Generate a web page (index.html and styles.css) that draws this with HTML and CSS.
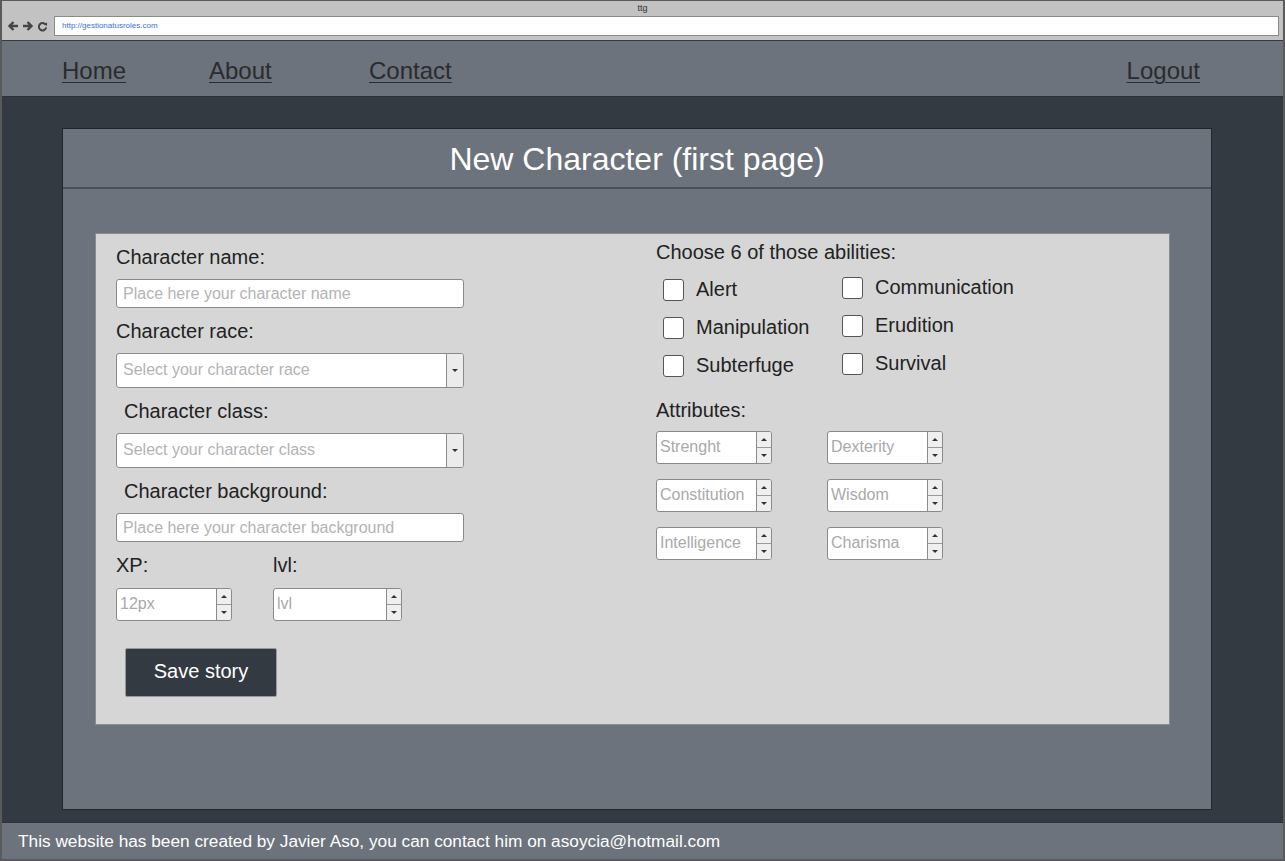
FILE: index.html
```html
<!DOCTYPE html>
<html>
<head>
<meta charset="utf-8">
<title>ttg</title>
<link rel="stylesheet" href="styles.css">
</head>
<body>
<div class="frame">
  <div class="chrome">
    <div class="chrome-title">ttg</div>
    <div class="chrome-bar">
      <div class="chrome-icons">
        <svg width="12" height="12" viewBox="0 0 12 12"><path d="M11 6H3M6.5 2L2.5 6l4 4" fill="none" stroke="#444" stroke-width="2.4"/></svg>
        <svg width="12" height="12" viewBox="0 0 12 12"><path d="M1 6h8M5.5 2l4 4-4 4" fill="none" stroke="#444" stroke-width="2.4"/></svg>
        <svg width="11" height="11" viewBox="0 0 12 12"><path d="M9.5 4.2A4 4 0 1 0 10 7" fill="none" stroke="#444" stroke-width="2.2"/><path d="M7.5 3.6L11 1.5 11 5.5z" fill="#444"/></svg>
      </div>
      <div class="url">http://gestionatusroles.com</div>
    </div>
  </div>

  <nav class="nav">
    <a class="nav-link" href="#">Home</a>
    <a class="nav-link" href="#">About</a>
    <a class="nav-link" href="#">Contact</a>
    <span class="nav-spacer"></span>
    <a class="nav-link" href="#">Logout</a>
  </nav>

  <main class="main">
    <section class="card">
      <header class="card-header">New Character (first page)</header>
      <div class="card-body">
        <div class="panel">
          <div class="col-left">
            <div class="label">Character name:</div>
            <input class="text-input" type="text" placeholder="Place here your character name">
            <div class="label">Character race:</div>
            <div class="select"><span class="select-text">Select your character race</span><span class="select-btn"><i class="tri-down"></i></span></div>
            <div class="label indent">Character class:</div>
            <div class="select"><span class="select-text">Select your character class</span><span class="select-btn"><i class="tri-down"></i></span></div>
            <div class="label indent">Character background:</div>
            <input class="text-input" type="text" placeholder="Place here your character background">
            <div class="xp-row">
              <div class="xp-field">
                <div class="label">XP:</div>
                <div class="num w116"><input class="num-input" type="text" placeholder="12px"><span class="spin"><span class="spin-half"><i class="tri-up"></i></span><span class="spin-half"><i class="tri-down"></i></span></span></div>
              </div>
              <div class="xp-field">
                <div class="label">lvl:</div>
                <div class="num w129"><input class="num-input" type="text" placeholder="lvl"><span class="spin"><span class="spin-half"><i class="tri-up"></i></span><span class="spin-half"><i class="tri-down"></i></span></span></div>
              </div>
            </div>
            <button class="save-btn" type="button">Save story</button>
          </div>

          <div class="col-right">
            <div class="label">Choose 6 of those abilities:</div>
            <div class="abilities">
              <div class="ab-col">
                <label class="check"><input type="checkbox" class="box"><span>Alert</span></label>
                <label class="check"><input type="checkbox" class="box"><span>Manipulation</span></label>
                <label class="check"><input type="checkbox" class="box"><span>Subterfuge</span></label>
              </div>
              <div class="ab-col ab-col2">
                <label class="check"><input type="checkbox" class="box"><span>Communication</span></label>
                <label class="check"><input type="checkbox" class="box"><span>Erudition</span></label>
                <label class="check"><input type="checkbox" class="box"><span>Survival</span></label>
              </div>
            </div>
            <div class="label attr-label">Attributes:</div>
            <div class="attrs">
              <div class="num w116"><input class="num-input" type="text" placeholder="Strenght"><span class="spin"><span class="spin-half"><i class="tri-up"></i></span><span class="spin-half"><i class="tri-down"></i></span></span></div>
              <div class="num w116"><input class="num-input" type="text" placeholder="Dexterity"><span class="spin"><span class="spin-half"><i class="tri-up"></i></span><span class="spin-half"><i class="tri-down"></i></span></span></div>
              <div class="num w116"><input class="num-input" type="text" placeholder="Constitution"><span class="spin"><span class="spin-half"><i class="tri-up"></i></span><span class="spin-half"><i class="tri-down"></i></span></span></div>
              <div class="num w116"><input class="num-input" type="text" placeholder="Wisdom"><span class="spin"><span class="spin-half"><i class="tri-up"></i></span><span class="spin-half"><i class="tri-down"></i></span></span></div>
              <div class="num w116"><input class="num-input" type="text" placeholder="Intelligence"><span class="spin"><span class="spin-half"><i class="tri-up"></i></span><span class="spin-half"><i class="tri-down"></i></span></span></div>
              <div class="num w116"><input class="num-input" type="text" placeholder="Charisma"><span class="spin"><span class="spin-half"><i class="tri-up"></i></span><span class="spin-half"><i class="tri-down"></i></span></span></div>
            </div>
          </div>
        </div>
      </div>
    </section>
  </main>

  <footer class="footer">This website has been created by Javier Aso, you can contact him on asoycia@hotmail.com</footer>
</div>
</body>
</html>
```

FILE: styles.css
```css
* { box-sizing: border-box; }
html, body { margin: 0; padding: 0; }
body {
  width: 1285px;
  height: 861px;
  overflow: hidden;
  font-family: "Liberation Sans", Arial, sans-serif;
  background: #343a42;
}
.frame {
  width: 1285px;
  height: 861px;
  border: 2px solid #5a5a5a;
  border-top-width: 1px;
  display: flex;
  flex-direction: column;
}
.chrome {
  height: 39px;
  background: #c2c2c2;
  display: flex;
  flex-direction: column;
}
.chrome-title {
  height: 15px;
  font-size: 9px;
  line-height: 14px;
  text-align: center;
  color: #333;
}
.chrome-bar {
  display: flex;
  align-items: center;
  height: 20px;
  padding-left: 5px;
}
.chrome-icons {
  display: flex;
  align-items: center;
  gap: 3px;
  width: 47px;
}
.url {
  width: 1225px;
  height: 20px;
  background: #fff;
  border: 1px solid #8a8a8a;
  font-size: 8px;
  line-height: 18px;
  padding-left: 7px;
  color: #3b6fd6;
}
.nav {
  height: 58px;
  background: #6c737c;
  border-top: 1px solid #3a3a3a;
  border-bottom: 1px solid #2e3238;
  display: grid;
  grid-template-columns: 147px 160px auto 1fr auto;
  align-items: center;
  padding-left: 60px;
  padding-right: 83px;
  padding-top: 7px;
}
.nav-link {
  font-size: 24px;
  color: #2b2b2b;
  text-decoration: underline;
  text-underline-offset: 3px;
  text-decoration-thickness: 1px;
  padding-bottom: 2px;
}
.main {
  flex: 1;
  background: #343a42;
  padding: 31px 0 12px 60px;
}
.card {
  width: 1150px;
  height: 682px;
  background: #6c737c;
  border: 1px solid #23272c;
}
.card-header {
  height: 60px;
  border-bottom: 2px solid #4a5058;
  color: #fff;
  font-size: 32px;
  text-align: center;
  line-height: 60px;
}
.card-body {
  padding: 44px 40px 0 32px;
}
.panel {
  width: 1075px;
  height: 492px;
  background: #d6d6d6;
  border: 1px solid #8c8c8c;
  display: grid;
  grid-template-columns: 540px 1fr;
  padding-left: 20px;
}
.label {
  font-size: 20px;
  line-height: 24px;
  height: 24px;
  color: #222;
}
.indent { padding-left: 8px; }
.col-left {
  padding-top: 11px;
  display: flex;
  flex-direction: column;
  align-items: flex-start;
}
.col-left > .label { margin-bottom: 10px; }
.text-input {
  width: 348px;
  height: 29px;
  border: 1px solid #8a8a8a;
  border-radius: 3px;
  background: #fff;
  font-family: "Liberation Sans", Arial, sans-serif;
  font-size: 16px;
  padding: 0 6px;
  margin: 0 0 11px 0;
  outline: none;
}
.text-input::placeholder, .num-input::placeholder { color: #b3b3b3; opacity: 1; }
.select {
  width: 348px;
  height: 35px;
  border: 1px solid #8a8a8a;
  border-radius: 3px;
  background: #fff;
  display: flex;
  margin-bottom: 11px;
  overflow: hidden;
}
.select-text {
  flex: 1;
  font-size: 16px;
  line-height: 32px;
  padding-left: 6px;
  color: #b3b3b3;
}
.select-btn {
  width: 17px;
  border-left: 1px solid #8a8a8a;
  background: #ececec;
  display: flex;
  align-items: center;
  justify-content: center;
}
.tri-down, .tri-up {
  display: block;
  width: 0;
  height: 0;
  border-left: 3px solid transparent;
  border-right: 3px solid transparent;
}
.tri-down { border-top: 3px solid #333; }
.tri-up { border-bottom: 3px solid #333; }
.xp-row {
  display: flex;
  gap: 41px;
}
.xp-field .label { margin-bottom: 11px; }
.num {
  height: 33px;
  border: 1px solid #8a8a8a;
  border-radius: 3px;
  background: #fff;
  display: flex;
  overflow: hidden;
}
.w116 { width: 116px; }
.w129 { width: 129px; }
.num-input {
  flex: 1;
  min-width: 0;
  border: none;
  outline: none;
  background: transparent;
  font-family: "Liberation Sans", Arial, sans-serif;
  font-size: 16px;
  padding: 0 0 2px 3px;
}
.num-input::placeholder { color: #a9a9a9; }
.spin {
  width: 15px;
  border-left: 1px solid #8a8a8a;
  background: #efefef;
  display: flex;
  flex-direction: column;
}
.spin-half {
  flex: 1;
  display: flex;
  align-items: center;
  justify-content: center;
}
.spin-half + .spin-half { border-top: 1px solid #9a9a9a; }
.save-btn {
  margin-top: 27px;
  margin-left: 9px;
  width: 152px;
  height: 49px;
  background: #343a42;
  border: 1px solid #9a9a9a;
  border-radius: 2px;
  color: #fff;
  font-family: "Liberation Sans", Arial, sans-serif;
  font-size: 20px;
  padding-bottom: 4px;
}
.col-right {
  padding-top: 6px;
}
.abilities {
  display: flex;
  margin-top: 15px;
  padding-left: 7px;
}
.ab-col {
  width: 179px;
  display: flex;
  flex-direction: column;
  gap: 16px;
}
.ab-col2 { margin-top: -2px; }
.check {
  display: flex;
  align-items: center;
  height: 22px;
  font-size: 20px;
  color: #222;
}
.check span { margin-left: 12px; position: relative; top: -1px; }
.box {
  appearance: none;
  -webkit-appearance: none;
  margin: 0;
  width: 21px;
  height: 22px;
  border: 1.5px solid #555;
  border-radius: 3px;
  background: #fff;
}
.attr-label { margin-top: 21px; }
.attrs {
  margin-top: 9px;
  display: grid;
  grid-template-columns: 116px 116px;
  column-gap: 55px;
  row-gap: 15px;
}
.footer {
  height: 37px;
  background: #6c737c;
  border-top: 1px solid #2e3238;
  color: #fff;
  font-size: 17.25px;
  line-height: 36px;
  padding-left: 16px;
}
```
